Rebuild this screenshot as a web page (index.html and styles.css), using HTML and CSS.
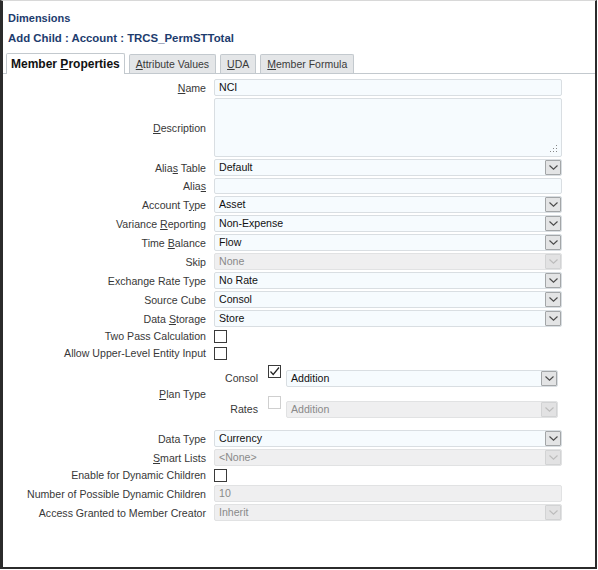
FILE: index.html
```html
<!DOCTYPE html>
<html>
<head>
<meta charset="utf-8">
<link rel="stylesheet" href="styles.css">
</head>
<body>
<div class="frame">
  <div class="head">
    <div class="h1">Dimensions</div>
    <div class="h2">Add Child : Account : TRCS_PermSTTotal</div>
  </div>
  <div class="tabs">
    <div class="tab active">Member <u>P</u>roperties</div>
    <div class="tab"><u>A</u>ttribute Values</div>
    <div class="tab"><u>U</u>DA</div>
    <div class="tab"><u>M</u>ember Formula</div>
  </div>
  <div class="form">
    <div class="row r17 mb2"><label><u>N</u>ame</label><div class="inp">NCI</div></div>
    <div class="row r59 mb2"><label><u>D</u>escription</label><div class="inp area"><svg class="grip" width="8" height="8" viewBox="0 0 8 8"><g fill="#888"><rect x="6" y="0" width="1" height="1"/><rect x="6" y="3" width="1" height="1"/><rect x="3" y="3" width="1" height="1"/><rect x="6" y="6" width="1" height="1"/><rect x="3" y="6" width="1" height="1"/><rect x="0" y="6" width="1" height="1"/></g></svg></div></div>
    <div class="row r17 mb2"><label>Alia<u>s</u> Table</label><div class="inp sel">Default<span class="btn"><svg width="9" height="5" viewBox="0 0 9 5"><polyline points="0.5,0.5 4.5,4.2 8.5,0.5"/></svg></span></div></div>
    <div class="row r16 mb2"><label>Alia<u>s</u></label><div class="inp"></div></div>
    <div class="row r17 mb2"><label>Account T<u>y</u>pe</label><div class="inp sel">Asset<span class="btn"><svg width="9" height="5" viewBox="0 0 9 5"><polyline points="0.5,0.5 4.5,4.2 8.5,0.5"/></svg></span></div></div>
    <div class="row r17 mb2"><label>Variance <u>R</u>eporting</label><div class="inp sel">Non-Expense<span class="btn"><svg width="9" height="5" viewBox="0 0 9 5"><polyline points="0.5,0.5 4.5,4.2 8.5,0.5"/></svg></span></div></div>
    <div class="row r17 mb2"><label>Time <u>B</u>alance</label><div class="inp sel">Flow<span class="btn"><svg width="9" height="5" viewBox="0 0 9 5"><polyline points="0.5,0.5 4.5,4.2 8.5,0.5"/></svg></span></div></div>
    <div class="row r17 mb2"><label>Skip</label><div class="inp sel dis">None<span class="btn"><svg width="9" height="5" viewBox="0 0 9 5"><polyline points="0.5,0.5 4.5,4.2 8.5,0.5"/></svg></span></div></div>
    <div class="row r17 mb2"><label>Exchange Rate Type</label><div class="inp sel">No Rate<span class="btn"><svg width="9" height="5" viewBox="0 0 9 5"><polyline points="0.5,0.5 4.5,4.2 8.5,0.5"/></svg></span></div></div>
    <div class="row r17 mb2"><label>Source Cube</label><div class="inp sel">Consol<span class="btn"><svg width="9" height="5" viewBox="0 0 9 5"><polyline points="0.5,0.5 4.5,4.2 8.5,0.5"/></svg></span></div></div>
    <div class="row r17 mb2"><label>Data <u>S</u>torage</label><div class="inp sel">Store<span class="btn"><svg width="9" height="5" viewBox="0 0 9 5"><polyline points="0.5,0.5 4.5,4.2 8.5,0.5"/></svg></span></div></div>
    <div class="row r14 mb3"><label>Two Pass Calculation</label><div><span class="cb"></span></div></div>
    <div class="row r14 mb2"><label>Allow Upper-Level Entity Input</label><div><span class="cb"></span></div></div>
    <div class="row plan">
      <label class="plabel"><u>P</u>lan Type</label>
      <div class="subs">
        <div class="sub">
          <span class="slabel">Consol</span>
          <span class="cb on"><svg width="13" height="13" viewBox="0 0 13 13"><polyline points="2.5,6.5 5.2,9.5 11,2.5" fill="none" stroke="#222" stroke-width="1.2"/></svg></span>
          <div class="inp sel">Addition<span class="btn"><svg width="9" height="5" viewBox="0 0 9 5"><polyline points="0.5,0.5 4.5,4.2 8.5,0.5"/></svg></span></div>
        </div>
        <div class="sub">
          <span class="slabel">Rates</span>
          <span class="cb off"></span>
          <div class="inp sel dis">Addition<span class="btn"><svg width="9" height="5" viewBox="0 0 9 5"><polyline points="0.5,0.5 4.5,4.2 8.5,0.5"/></svg></span></div>
        </div>
      </div>
    </div>
    <div class="row r17 mb2"><label>Data Type</label><div class="inp sel">Currency<span class="btn"><svg width="9" height="5" viewBox="0 0 9 5"><polyline points="0.5,0.5 4.5,4.2 8.5,0.5"/></svg></span></div></div>
    <div class="row r17 mb2"><label><u>S</u>mart Lists</label><div class="inp sel dis">&lt;None&gt;<span class="btn"><svg width="9" height="5" viewBox="0 0 9 5"><polyline points="0.5,0.5 4.5,4.2 8.5,0.5"/></svg></span></div></div>
    <div class="row r14 mb3"><label>Enable for Dynamic Children</label><div><span class="cb"></span></div></div>
    <div class="row r17 mb2"><label>Number of Possible Dynamic Children</label><div class="inp dis">10</div></div>
    <div class="row r17 mb2"><label>Access Granted to Member Creator</label><div class="inp sel dis">Inherit<span class="btn"><svg width="9" height="5" viewBox="0 0 9 5"><polyline points="0.5,0.5 4.5,4.2 8.5,0.5"/></svg></span></div></div>
  </div>
</div>
</body>
</html>
```
FILE: styles.css
```css
html, body { margin: 0; padding: 0; background: #fff; }
body { font-family: "Liberation Sans", Arial, sans-serif; font-size: 10.6px; color: #383838; }
.frame {
  width: 592px; height: 566px;
  border-left: 3px solid #2b2b2b;
  border-right: 2px solid #2b2b2b;
  border-bottom: 2px solid #2b2b2b;
  border-top: 1px solid #d8d8d8;
  position: relative;
  overflow: hidden;
}
.head { padding-left: 5px; color: #1d3c6e; font-weight: bold; }
.h1 { font-size: 11px; height: 14px; line-height: 14px; margin-top: 10px; }
.h2 { font-size: 11.4px; height: 16px; line-height: 16px; margin-top: 5px; }
.tabs {
  display: flex; gap: 4px; align-items: flex-end;
  margin-top: 6px; padding-left: 3px; height: 21px;
  border-bottom: 1px solid #c3c9ce;
}
.tab {
  height: 18px; line-height: 18px; padding: 0 6px;
  background: #e4e6e8; border: 1px solid #c3c9ce; border-bottom: none;
  border-radius: 2px 2px 0 0; color: #3a3a3a; font-size: 10.5px;
}
.tab.active {
  height: 20px; line-height: 21px; background: #fff; color: #111; font-weight: bold; font-size: 12px;
  margin-bottom: -1px; position: relative; padding: 0 4px;
}
.form { padding-top: 5px; }
.row { display: grid; grid-template-columns: 203px 348px; column-gap: 8px; align-items: center; }
.row label { text-align: right; white-space: nowrap; color: #383838; }
.r17 { height: 17px; }
.r16 { height: 16px; }
.r59 { height: 59px; }
.r14 { height: 14px; }
.mb2 { margin-bottom: 2px; }
.mb3 { margin-bottom: 3px; }
.inp {
  box-sizing: border-box; height: 100%;
  background: #f6fbfe; border: 1px solid #d9dee2; border-radius: 2px;
  padding-left: 4px; line-height: 15px; color: #111; position: relative;
  white-space: nowrap;
}
.area { height: 59px; }
.grip { position: absolute; right: 3px; bottom: 3px; }
.btn {
  position: absolute; right: 0; top: 0; width: 16px; height: 15px; box-sizing: border-box;
  background: #e3e4e5; border: 1px solid #a3a6a8; border-radius: 1px;
  display: flex; align-items: center; justify-content: center;
}
.btn svg polyline { fill: none; stroke: #4a4a4a; stroke-width: 1.1; }
.dis { background: #efeff0; border-color: #e1e2e3; color: #8a8a8a; }
.dis .btn { background: #e2e2e3; border-color: #d2d3d4; }
.dis .btn svg polyline { stroke: #bcbcbc; }
.cb {
  display: block; width: 13px; height: 13px; box-sizing: border-box;
  border: 1px solid #3a3a3a; background: #fff;
}
.cb.on svg { display: block; margin: -1px; }
.cb.off { border-color: #cfcfcf; }
.plan { align-items: start; height: 53px; margin-bottom: 12px; padding-top: 3px; }
.plabel { align-self: center; margin-top: 4px; }
.subs { display: flex; flex-direction: column; gap: 9px; }
.sub {
  display: grid; grid-template-columns: 44px 28px 272px;
  height: 22px; align-items: end;
}
.sub .slabel { text-align: right; line-height: 17px; height: 17px; }
.sub .cb { align-self: start; margin-left: 10px; }
.sub .inp { height: 17px; }
```
